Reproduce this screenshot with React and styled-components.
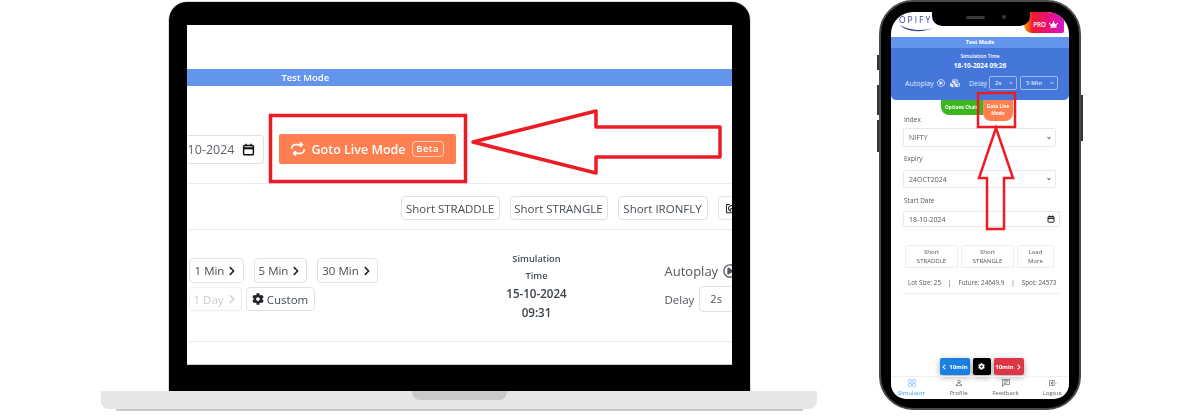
import React from "react";
import styled, { createGlobalStyle } from "styled-components";
import { FaChevronRight, FaChevronLeft, FaChevronDown, FaCog, FaRegPlayCircle, FaCubes, FaCrown, FaRegShareSquare } from "react-icons/fa";
import { FaRepeat } from "react-icons/fa6";
import { BsGrid, BsPerson, BsChatLeftText, BsBoxArrowInLeft } from "react-icons/bs";

const GlobalStyle = createGlobalStyle`
  html, body {
    margin: 0;
    background: #fff;
    font-family: "Open Sans", "Liberation Sans", sans-serif;
    color: #212529;
  }
`;

const Stage = styled.div`
  position: relative;
  width: 1200px;
  height: 420px;
  overflow: hidden;
  display: flex;
  align-items: flex-start;
  padding-left: 101px;
  box-sizing: border-box;
`;

const Annotations = styled.svg`
  position: absolute;
  left: 0;
  top: 0;
  pointer-events: none;
`;

/* laptop */
const Laptop = styled.div`
  width: 716px;
  margin-top: 2px;
  display: flex;
  flex-direction: column;
`;

const Lid = styled.div`
  width: 545px;
  height: 340px;
  margin: 0 auto;
  border: solid #000;
  border-width: 23px 18px 26px;
  border-radius: 18px 18px 0 0;
  box-shadow: 0 0 0 1px #ddd;
`;

const Screen = styled.div`
  width: 545px;
  height: 340px;
  background: #fff;
  overflow: hidden;
  display: flex;
  flex-direction: column;
  box-sizing: border-box;
  border-bottom: 1px solid #ccc;
  filter: blur(0.25px);
`;

const ModeBar = styled.div`
  margin-top: 44px;
  height: 17px;
  flex: none;
  background: #6495ed;
  color: #fff;
  font-size: 9.5px;
  font-weight: 600;
  line-height: 17px;
  padding-left: 95px;
`;

const DateRow = styled.div`
  height: 98px;
  flex: none;
  border-bottom: 1px solid #e9ecef;
  box-sizing: border-box;
  display: flex;
  align-items: flex-start;
  padding-top: 48px;
`;

const DateField = styled.div`
  width: 77px;
  height: 29px;
  margin-top: 1px;
  box-sizing: border-box;
  border: 1px solid #dee2e6;
  border-left: none;
  border-radius: 0 4px 4px 0;
  display: flex;
  align-items: center;
  justify-content: flex-end;
  gap: 7px;
  padding-right: 8px;
  font-size: 12.5px;
  white-space: nowrap;
  color: #5c646b;
`;

const LiveButton = styled.div`
  margin-left: 15px;
  width: 177px;
  height: 30px;
  box-sizing: border-box;
  background: #ff7f50;
  border-radius: 2px;
  color: #fff;
  display: flex;
  align-items: center;
  padding-left: 12px;
  font-size: 12.5px;
  font-weight: 600;
`;

const LiveText = styled.span`
  margin-left: 7px;
`;

const BetaTag = styled.span`
  margin-left: 6px;
  width: 32px;
  height: 16px;
  box-sizing: border-box;
  border: 1px solid #ffd3c2;
  border-radius: 4px;
  font-size: 9.5px;
  line-height: 14px;
  text-align: center;
  letter-spacing: 0.4px;
  font-weight: 600;
`;

const ShortRow = styled.div`
  height: 46px;
  flex: none;
  box-sizing: border-box;
  border-bottom: 1px solid #e9ecef;
  display: flex;
  gap: 10px;
  padding: 12px 0 0 214px;
`;

const OutlineButton = styled.div`
  width: ${(p) => p.$w}px;
  height: ${(p) => p.$h || 24}px;
  flex: none;
  box-sizing: border-box;
  border: 1px solid #dee2e6;
  border-radius: 4px;
  display: flex;
  align-items: center;
  justify-content: center;
  gap: 3px;
  font-size: 11.5px;
  color: ${(p) => (p.$disabled ? "#c9cdd1" : "#454d55")};
  border-color: ${(p) => (p.$disabled ? "#eceef0" : "#dee2e6")};
  svg {
    color: ${(p) => (p.$disabled ? "#d0d3d6" : "#212529")};
  }
`;

const IconButton = styled(OutlineButton)`
  justify-content: flex-start;
  padding-left: 7px;
`;

const SimRow = styled.div`
  height: 112px;
  flex: none;
  box-sizing: border-box;
  border-bottom: 1px solid #e9ecef;
  display: flex;
  padding-left: 2px;
`;

const StepColumn = styled.div`
  width: 258px;
  padding-top: 28px;
  flex: none;
  display: flex;
  flex-direction: column;
  gap: 4px;
`;

const StepRow = styled.div`
  display: flex;
  gap: ${(p) => p.$gap}px;
`;

const SimBlock = styled.div`
  width: 180px;
  flex: none;
  padding-top: 20px;
  text-align: center;
`;

const SimLabel = styled.div`
  font-size: 9.3px;
  font-weight: 600;
  line-height: 17px;
  color: #454d55;
`;

const SimValue = styled.div`
  font-size: 11.6px;
  font-weight: 600;
  line-height: 19px;
  color: #3a4249;
`;

const AutoBlock = styled.div`
  margin-left: 38px;
  padding-top: 31px;
  white-space: nowrap;
`;

const AutoLine = styled.div`
  display: flex;
  align-items: center;
  gap: 5px;
  font-size: 13px;
  color: #50575e;
  height: 20px;
`;

const DelayLine = styled.div`
  display: flex;
  align-items: center;
  margin-top: 5px;
  font-size: 11.5px;
  color: #50575e;
`;

const DelayBox = styled.div`
  margin-left: 5px;
  width: 60px;
  height: 26px;
  box-sizing: border-box;
  border: 1px solid #dee2e6;
  border-radius: 4px;
  padding-left: 10px;
  line-height: 24px;
  font-size: 11px;
`;

const Base = styled.div`
  height: 18px;
  background: #e6e6e6;
  border-radius: 0 0 8px 8px;
  display: flex;
  justify-content: center;
`;

const BaseNotch = styled.div`
  width: 95px;
  height: 9px;
  background: #c9c9c9;
  border-radius: 0 0 8px 8px;
`;

const BaseShadow = styled.div`
  height: 2px;
  margin: 0 14px 0 15px;
  background: #c9c9c9;
`;

/* phone */
const Phone = styled.div`
  position: relative;
  margin-left: 62px;
  width: 202px;
  height: 410px;
  flex: none;
  box-sizing: border-box;
  background: #000;
  border: 2px solid #4a4a4a;
  border-radius: 34px;
  padding: 10px 10px 9px;
`;

const SideKey = styled.div`
  position: absolute;
  top: ${(p) => p.$top}px;
  height: ${(p) => p.$h}px;
  width: 2px;
  background: #333;
  ${(p) => (p.$right ? "right: -4px;" : "left: -4px;")}
`;

const Notch = styled.div`
  position: absolute;
  left: 51px;
  top: 8px;
  width: 98px;
  height: 16px;
  background: #000;
  border-radius: 0 0 10px 10px;
  display: flex;
  align-items: flex-start;
  justify-content: flex-end;
  gap: 17px;
  padding: 5px 24px 0 0;
  box-sizing: border-box;
`;

const Speaker = styled.div`
  width: 19px;
  height: 3px;
  border-radius: 2px;
  background: #3a3a3a;
  margin-top: 1px;
`;

const Camera = styled.div`
  width: 4px;
  height: 4px;
  border-radius: 50%;
  background: #3a3a3a;
`;

const PhoneScreen = styled.div`
  height: 100%;
  border-radius: 22px 22px 15px 15px;
  overflow: hidden;
  background: #fff;
  display: flex;
  flex-direction: column;
  filter: blur(0.35px);
`;

const PhoneTop = styled.div`
  height: 25px;
  flex: none;
  display: flex;
  justify-content: space-between;
  padding: 0 5px 0 8px;
  box-sizing: border-box;
`;

const Logo = styled.div`
  position: relative;
  margin-top: 3px;
  font-size: 8.5px;
  line-height: 10px;
  letter-spacing: 2px;
  color: #2d3f8f;
`;

const Swoosh = styled.svg`
  position: absolute;
  left: 0;
  top: 9px;
`;

const ProBadge = styled.div`
  width: 40px;
  height: 21px;
  border-radius: 0 0 2px 8px;
  background: linear-gradient(90deg, #f7a800 0%, #f01a30 22%, #e8107a 60%, #d414c8 100%);
  color: #fff;
  display: flex;
  align-items: flex-end;
  justify-content: flex-end;
  gap: 3px;
  padding: 0 6px 4px 0;
  box-sizing: border-box;
  font-size: 6.3px;
  line-height: 9px;
  font-weight: 600;
`;

const PhoneMode = styled.div`
  height: 11px;
  flex: none;
  background: #6495ed;
  color: #fff;
  text-align: center;
  font-size: 5.5px;
  font-weight: 700;
  line-height: 11px;
`;

const Panel = styled.div`
  height: 52px;
  flex: none;
  background: #4477d9;
  border-radius: 0 0 5px 5px;
  color: #fff;
  box-sizing: border-box;
  padding-top: 5px;
  text-align: center;
`;

const PanelLabel = styled.div`
  font-size: 5px;
  font-weight: 600;
  line-height: 7px;
`;

const PanelDate = styled.div`
  font-size: 6.5px;
  font-weight: 700;
  line-height: 12px;
`;

const PanelControls = styled.div`
  margin-top: 4px;
  display: flex;
  align-items: center;
  padding-left: 14px;
  font-size: 7px;
  color: #dfe8fa;
`;

const PanelDelay = styled.span`
  margin-left: 9px;
`;

const PanelPlay = styled(FaRegPlayCircle)`
  margin-left: 3px;
`;

const PanelCubes = styled(FaCubes)`
  margin-left: 5px;
`;

const PanelSelect = styled.div`
  width: ${(p) => p.$w}px;
  height: 14px;
  margin-left: ${(p) => p.$ml}px;
  box-sizing: border-box;
  border: 1px solid #9fbaf0;
  border-radius: 2px;
  display: flex;
  align-items: center;
  justify-content: space-between;
  padding: 0 3px 0 5px;
  font-size: 6px;
  font-weight: 600;
`;

const TabRow = styled.div`
  height: 21px;
  flex: none;
  display: flex;
  padding-left: 50px;
  align-items: flex-start;
`;

const GreenTab = styled.div`
  width: 42px;
  height: 15px;
  background: #3cb521;
  border-radius: 0 0 0 8px;
  color: #fff;
  font-size: 4.8px;
  font-weight: 700;
  line-height: 14px;
  text-align: center;
  white-space: nowrap;
`;

const CoralTab = styled.div`
  width: 30px;
  height: 21px;
  background: #ff7f50;
  border-radius: 0 0 8px 8px;
  color: #fff;
  font-size: 4.8px;
  font-weight: 700;
  line-height: 7px;
  text-align: center;
  padding-top: 3px;
  box-sizing: border-box;
`;

const Form = styled.div`
  padding: 0 9px 0 12px;
  display: flex;
  flex-direction: column;
  flex: 1;
`;

const FieldLabel = styled.div`
  font-size: 6.5px;
  line-height: 7px;
  color: #50575e;
  margin: ${(p) => p.$mt}px 0 ${(p) => p.$mb}px 1px;
`;

const FieldBox = styled.div`
  width: ${(p) => p.$w}px;
  height: ${(p) => p.$h}px;
  box-sizing: border-box;
  border: 1px solid #e6e8ea;
  border-radius: 2px;
  display: flex;
  align-items: center;
  justify-content: space-between;
  padding: 0 4px 0 5px;
  font-size: 7px;
  color: #50575e;
  svg {
    color: #212529;
  }
`;

const SmallButtons = styled.div`
  display: flex;
  gap: 3px;
  margin: 18px 0 0 2px;
`;

const SmallButton = styled.div`
  width: ${(p) => p.$w}px;
  height: 23px;
  box-sizing: border-box;
  border: 1px solid #eceef0;
  border-radius: 2px;
  text-align: center;
  font-size: 6px;
  line-height: 9px;
  padding-top: 2px;
  color: #50575e;
`;

const Stats = styled.div`
  margin: 11px 0 0 5px;
  display: flex;
  gap: 7px;
  font-size: 6.3px;
  line-height: 8px;
  color: #50575e;
  white-space: nowrap;
`;

const FormRule = styled.div`
  height: 1px;
  background: #eceef0;
  margin-top: 6px;
  width: 157px;
`;

const FloatBar = styled.div`
  margin-top: auto;
  display: flex;
  justify-content: center;
  gap: 3px;
  margin-bottom: 1px;
`;

const FloatButton = styled.div`
  width: ${(p) => p.$w}px;
  height: 17px;
  background: ${(p) => p.$bg};
  border-radius: 2px;
  color: #fff;
  display: flex;
  align-items: center;
  justify-content: center;
  gap: 2px;
  font-size: 6px;
  font-weight: 700;
  box-shadow: 0 2px 6px rgba(0, 0, 0, 0.35);
`;

const BottomNav = styled.div`
  height: 22px;
  flex: none;
  border-top: 1px solid #f0f0f0;
  display: grid;
  grid-template-columns: repeat(4, 47px);
  margin-left: -3px;
`;

const NavItem = styled.div`
  display: flex;
  flex-direction: column;
  align-items: center;
  padding-top: 2px;
  font-size: 6px;
  line-height: 8px;
  color: ${(p) => (p.$active ? "#3d9bf0" : "#5c646b")};
  svg {
    margin-bottom: 2px;
    color: ${(p) => (p.$active ? "#3d9bf0" : "#3a4249")};
  }
`;

const CalendarIcon = ({ size }) => (
  <svg width={size} height={size} viewBox="0 0 16 16" fill="none" stroke="#111" strokeWidth="1.8">
    <rect x="2" y="3" width="12" height="11.5" rx="1" />
    <path d="M2 6.5h12" strokeWidth="2.6" />
    <path d="M5 1v3M11 1v3" />
  </svg>
);

export default function App() {
  return (
    <Stage>
      <GlobalStyle />
      <Laptop>
        <Lid>
          <Screen>
            <ModeBar>Test Mode</ModeBar>
            <DateRow>
              <DateField>
                <span>10-2024</span>
                <CalendarIcon size={13} />
              </DateField>
              <LiveButton>
                <FaRepeat size={14} />
                <LiveText>Goto Live Mode</LiveText>
                <BetaTag>Beta</BetaTag>
              </LiveButton>
            </DateRow>
            <ShortRow>
              <OutlineButton $w={99}>Short STRADDLE</OutlineButton>
              <OutlineButton $w={98}>Short STRANGLE</OutlineButton>
              <OutlineButton $w={90}>Short IRONFLY</OutlineButton>
              <IconButton $w={40}>
                <FaRegShareSquare size={12} />
              </IconButton>
            </ShortRow>
            <SimRow>
              <StepColumn>
                <StepRow $gap={10}>
                  <OutlineButton $w={55} $h={25}>1 Min <FaChevronRight size={10} /></OutlineButton>
                  <OutlineButton $w={53} $h={25}>5 Min <FaChevronRight size={10} /></OutlineButton>
                  <OutlineButton $w={61} $h={25}>30 Min <FaChevronRight size={10} /></OutlineButton>
                </StepRow>
                <StepRow $gap={4}>
                  <OutlineButton $w={53} $h={24} $disabled>1 Day <FaChevronRight size={10} /></OutlineButton>
                  <OutlineButton $w={69} $h={24}><FaCog size={12} /> Custom</OutlineButton>
                </StepRow>
              </StepColumn>
              <SimBlock>
                <SimLabel>Simulation</SimLabel>
                <SimLabel>Time</SimLabel>
                <SimValue>15-10-2024</SimValue>
                <SimValue>09:31</SimValue>
              </SimBlock>
              <AutoBlock>
                <AutoLine>Autoplay <FaRegPlayCircle size={14} /></AutoLine>
                <DelayLine>Delay<DelayBox>2s</DelayBox></DelayLine>
              </AutoBlock>
            </SimRow>
          </Screen>
        </Lid>
        <Base><BaseNotch /></Base>
        <BaseShadow />
      </Laptop>

      <Phone>
        <SideKey $top={53} $h={15} />
        <SideKey $top={83} $h={30} />
        <SideKey $top={118} $h={32} />
        <SideKey $right $top={93} $h={46} />
        <PhoneScreen>
          <PhoneTop>
            <Logo>
              OPIFY
              <Swoosh width="36" height="10" viewBox="0 0 36 10">
                <path d="M1 1c6 7 22 8 34 3C26 7 10 7 1 1z" fill="#2d3f8f" />
              </Swoosh>
            </Logo>
            <ProBadge>PRO <FaCrown size={9} /></ProBadge>
          </PhoneTop>
          <PhoneMode>Test Mode</PhoneMode>
          <Panel>
            <PanelLabel>Simulation Time</PanelLabel>
            <PanelDate>18-10-2024 09:26</PanelDate>
            <PanelControls>
              Autoplay
              <PanelPlay size={8} />
              <PanelCubes size={10} />
              <PanelDelay>Delay</PanelDelay>
              <PanelSelect $w={28} $ml={2}>2s <FaChevronDown size={4} /></PanelSelect>
              <PanelSelect $w={38} $ml={3}>5 Min <FaChevronDown size={4} /></PanelSelect>
            </PanelControls>
          </Panel>
          <TabRow>
            <GreenTab>Options Chain</GreenTab>
            <CoralTab>Goto Live Mode</CoralTab>
          </TabRow>
          <Form>
            <FieldLabel $mt={-5} $mb={5}>Index</FieldLabel>
            <FieldBox $w={153} $h={19}>NIFTY <FaChevronDown size={4} /></FieldBox>
            <FieldLabel $mt={8} $mb={8}>Expiry</FieldLabel>
            <FieldBox $w={153} $h={18}>24OCT2024 <FaChevronDown size={4} /></FieldBox>
            <FieldLabel $mt={9} $mb={7}>Start Date</FieldLabel>
            <FieldBox $w={157} $h={16}>18-10-2024 <CalendarIcon size={8} /></FieldBox>
            <SmallButtons>
              <SmallButton $w={53}>Short<br />STRADDLE</SmallButton>
              <SmallButton $w={53}>Short<br />STRANGLE</SmallButton>
              <SmallButton $w={37}>Load<br />More</SmallButton>
            </SmallButtons>
            <Stats>
              <span>Lot Size: 25</span><span>|</span>
              <span>Future: 24649.9</span><span>|</span>
              <span>Spot: 24573</span>
            </Stats>
            <FormRule />
            <FloatBar>
              <FloatButton $w={30} $bg="#1a7fe0"><FaChevronLeft size={6} /> 10min</FloatButton>
              <FloatButton $w={18} $bg="#000"><FaCog size={7} /></FloatButton>
              <FloatButton $w={30} $bg="#dc3545">10min <FaChevronRight size={6} /></FloatButton>
            </FloatBar>
          </Form>
          <BottomNav>
            <NavItem $active><BsGrid size={8} />Simulator</NavItem>
            <NavItem><BsPerson size={8} />Profile</NavItem>
            <NavItem><BsChatLeftText size={8} />Feedback</NavItem>
            <NavItem><BsBoxArrowInLeft size={8} />Logout</NavItem>
          </BottomNav>
        </PhoneScreen>
        <Notch><Speaker /><Camera /></Notch>
      </Phone>

      <Annotations width="1200" height="420" fill="none" stroke="#ed1c24">
        <rect x="270.5" y="115.5" width="195" height="66" strokeWidth="3.5" />
        <path d="M473 142L596 111V127H720V157H596V173Z" strokeWidth="3.5" strokeLinejoin="round" />
        <rect x="978" y="93" width="37" height="34" strokeWidth="2.5" />
        <path d="M996 128L979 178H987V229H1004V178H1013Z" strokeWidth="2.5" />
      </Annotations>
    </Stage>
  );
}
